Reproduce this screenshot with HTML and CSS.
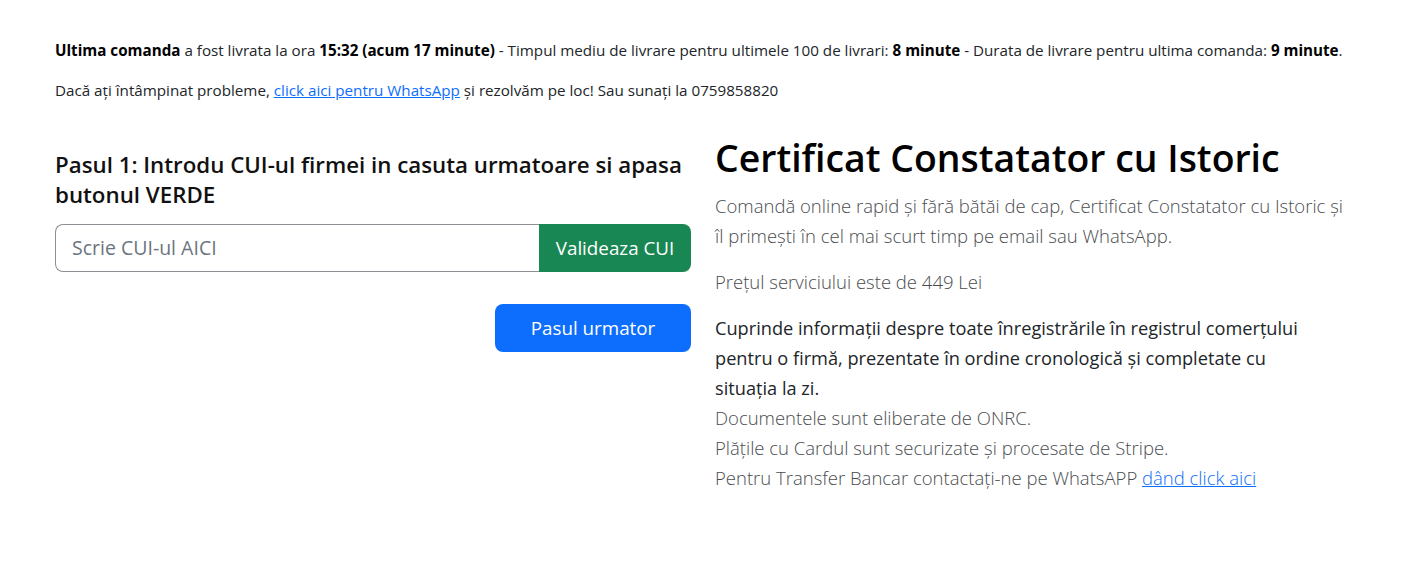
FILE: index.html
```html
<!DOCTYPE html>
<html lang="ro">
<head>
  <meta charset="UTF-8">
  <meta name="viewport" content="width=device-width, initial-scale=1.0">
  <title>Certificat Constatator cu Istoric</title>
  <link rel="stylesheet" href="styles.css">
</head>
<body>

  <div class="container">
    <!-- Delivery status -->
    <section class="status">
      <p><b>Ultima comanda</b> a fost livrata la ora <b>15:32 (acum 17 minute)</b> - Timpul mediu de livrare pentru ultimele 100 de livrari: <b>8 minute</b> - Durata de livrare pentru ultima comanda: <b>9 minute</b>.</p>
      <p>Dacă ați întâmpinat probleme, <a href="#">click aici pentru WhatsApp</a> și rezolvăm pe loc! Sau sunați la 0759858820</p>
    </section>

    <div class="row">
      <!-- Order form -->
      <div class="col col-form">
        <h4 class="step-title">Pasul 1: Introdu CUI-ul firmei in casuta urmatoare si apasa butonul VERDE</h4>
        <div class="input-group">
          <input type="text" class="cui-input" placeholder="Scrie CUI-ul AICI">
          <button class="btn btn-success">Valideaza CUI</button>
        </div>
        <div class="next-step">
          <button class="btn btn-primary">Pasul urmator</button>
        </div>
      </div>

      <!-- Product description -->
      <div class="col col-info">
        <h1>Certificat Constatator cu Istoric</h1>
        <p class="lead">Comandă online rapid și fără bătăi de cap, Certificat Constatator cu Istoric și<br>
          îl primești în cel mai scurt timp pe email sau WhatsApp.</p>
        <p class="lead">Prețul serviciului este de 449 Lei</p>
        <p class="description">Cuprinde informaţii despre toate înregistrările în registrul comerţului<br>
          pentru o firmă, prezentate în ordine cronologică şi completate cu<br>
          situaţia la zi.</p>
        <p class="lead">Documentele sunt eliberate de ONRC.<br>
          Plățile cu Cardul sunt securizate și procesate de Stripe.<br>
          Pentru Transfer Bancar contactați-ne pe WhatsAPP <a href="#">dând click aici</a></p>
      </div>
    </div>
  </div>

</body>
</html>
```

FILE: styles.css
```css
/* Base styles */
* {
  margin: 0;
  padding: 0;
  box-sizing: border-box;
}

body {
  font-family: 'Open Sans', 'Noto Sans', Arial, sans-serif;
  background-color: #ffffff;
  color: #212529;
  font-size: 15.2px;
  line-height: 1.4;
}

a {
  color: #0d6efd;
  text-decoration: underline;
}

.container {
  width: 1296px;
  margin-left: 55px;
  padding-top: 40px;
}

/* Delivery status */
.status p {
  margin-bottom: 19px;
}

.status b {
  font-weight: 700;
  color: #000;
}

/* Two columns */
.row {
  display: flex;
  gap: 24px;
  margin-top: 32px;
}

.col {
  flex: 1;
  min-width: 0;
}

/* Left column */
.col-form {
  padding-top: 16px;
}

.step-title {
  font-size: 22.3px;
  font-weight: 600;
  line-height: 30px;
  color: #111;
  margin-bottom: 14px;
}

.input-group {
  display: flex;
  height: 48px;
}

.cui-input {
  flex: 1;
  min-width: 0;
  font-family: inherit;
  font-size: 19.5px;
  padding: 0 16px;
  border: 1px solid #8c8f93;
  border-right: none;
  border-radius: 8px 0 0 8px;
  color: #212529;
  outline: none;
}

.cui-input::placeholder {
  color: #6c757d;
}

.btn {
  font-family: inherit;
  font-size: 18.8px;
  color: #ffffff;
  border: none;
  cursor: pointer;
}

.btn-success {
  background-color: #198754;
  width: 152px;
  border-radius: 0 8px 8px 0;
}

.next-step {
  display: flex;
  justify-content: flex-end;
  margin-top: 32px;
}

.btn-primary {
  background-color: #0d6efd;
  width: 196px;
  height: 48px;
  border-radius: 8px;
}

/* Right column */
.col-info h1 {
  font-size: 37.4px;
  font-weight: 600;
  line-height: 48px;
  color: #000;
  margin-bottom: 9px;
}

.col-info p {
  font-size: 18.5px;
  line-height: 30px;
  margin-bottom: 16px;
}

.col-info .lead {
  font-weight: 300;
  color: #4a4d50;
}

.col-info .description {
  font-size: 18.2px;
  margin-bottom: 0;
  color: #212529;
}
```
